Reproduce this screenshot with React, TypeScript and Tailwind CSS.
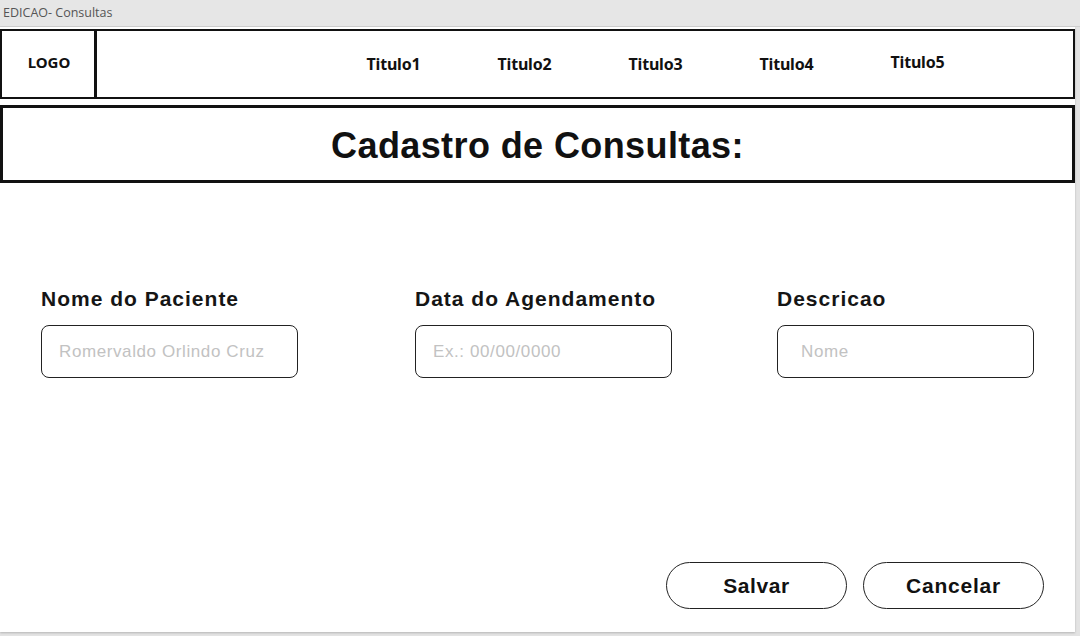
import React from 'react';

const titles = ['Titulo1', 'Titulo2', 'Titulo3', 'Titulo4', 'Titulo5'];

const Field: React.FC<{ label: string; placeholder: string; pad: string; className?: string }> = ({
  label,
  placeholder,
  pad,
  className,
}) => (
  <div className={`flex flex-col ${className ?? ''}`}>
    <label className="text-[21px] font-bold tracking-[1px] leading-[24px] text-[#151515]">{label}</label>
    <div
      className={`mt-[14px] flex h-[53px] w-[257px] items-center rounded-[8px] border-[1.5px] border-[#222] bg-white ${pad}`}
    >
      <span className="text-[17px] tracking-[0.6px] text-[#c2c2c2]">{placeholder}</span>
    </div>
  </div>
);

const App: React.FC = () => {
  return (
    <div
      className="flex h-[636px] w-[1080px] flex-col overflow-hidden bg-[#e3e3e3]"
      style={{ fontFamily: '"Liberation Sans", Arial, sans-serif' }}
    >
      {/* window title */}
      <div className="flex h-[27px] items-center border-b border-[#cfcfcf] bg-[#e6e6e6] px-[3px]">
        <span className="text-[12.5px] text-[#555]" style={{ fontFamily: '"Open Sans", sans-serif' }}>
          EDICAO- Consultas
        </span>
      </div>

      <div className="mr-[5px] mb-[4px] flex flex-1 flex-col bg-white shadow-[0_1px_2px_rgba(0,0,0,0.2)]">
        {/* nav */}
        <div className="mt-[2px] flex h-[70px] border-2 border-[#111]">
          <div
            className="flex w-[95px] items-center justify-center border-r-[3px] border-[#111] pb-[3px] pl-[2px] text-[15px] font-bold text-[#111]"
            style={{ fontFamily: '"Noto Sans", sans-serif' }}
          >
            LOGO
          </div>
          <div className="ml-[231px] flex items-center" style={{ fontFamily: '"Noto Sans", sans-serif' }}>
            {titles.map((t, i) => (
              <span
                key={t}
                className={`w-[131px] text-center text-[16px] font-bold tracking-[-0.2px] text-[#111] ${
                  i === 4 ? 'mb-[4px]' : ''
                }`}
              >
                {t}
              </span>
            ))}
          </div>
        </div>

        {/* heading */}
        <div className="mt-[6px] flex h-[78px] items-center justify-center border-[3px] border-[#111] pt-[4px]">
          <h1 className="text-[36px] font-bold tracking-[0.4px] text-[#111]">Cadastro de Consultas:</h1>
        </div>

        {/* form */}
        <div className="mt-[104px] flex pl-[41px]">
          <Field label="Nome do Paciente" placeholder="Romervaldo Orlindo Cruz" pad="pl-[17px]" />
          <Field
            label="Data do Agendamento"
            placeholder="Ex.: 00/00/0000"
            pad="pl-[17px]"
            className="ml-[117px]"
          />
          <Field label="Descricao" placeholder="Nome" pad="pl-[23px]" className="ml-[105px]" />
        </div>

        <div className="mt-auto mb-[23px] flex justify-end gap-[16px] pr-[31px]">
          <button className="h-[47px] w-[181px] rounded-full border-[1.5px] border-[#222] text-[21px] font-bold tracking-[0.6px] text-[#111]">
            Salvar
          </button>
          <button className="h-[47px] w-[181px] rounded-full border-[1.5px] border-[#222] text-[21px] font-bold tracking-[0.8px] text-[#111]">
            Cancelar
          </button>
        </div>
      </div>
    </div>
  );
};

export default App;
